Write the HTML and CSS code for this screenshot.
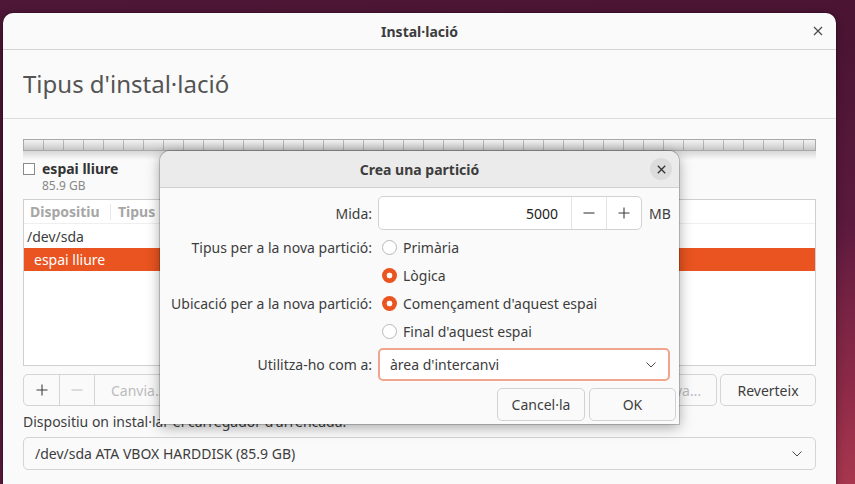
FILE: index.html
```html
<!DOCTYPE html>
<html>
<head>
<meta charset="utf-8">
<title>Instal·lació</title>
<link rel="stylesheet" href="styles.css">
</head>
<body>
<div class="window">
  <div class="titlebar">
    <span class="title">Instal·lació</span>
    <span class="wclose"><svg width="10" height="10" viewBox="0 0 10 10"><path d="M1 1L9 9M9 1L1 9" stroke="#4a4a4a" stroke-width="1.2" fill="none"/></svg></span>
  </div>
  <div class="heading"><h1>Tipus d'instal·lació</h1></div>
  <div class="content">
    <div class="pbar"></div>
    <div class="legend">
      <span class="check"></span>
      <div class="legend-text">
        <div class="lname">espai lliure</div>
        <div class="lsize">85.9 GB</div>
      </div>
    </div>
    <div class="table">
      <div class="thead">
        <span class="th th-dev">Dispositiu</span>
        <span class="th th-type">Tipus</span>
        <span class="th">Punt de muntatge</span>
      </div>
      <div class="tr">/dev/sda</div>
      <div class="tr sel">espai lliure</div>
    </div>
    <div class="toolbar">
      <div class="group">
        <span class="tbtn icon"><svg width="12" height="12" viewBox="0 0 12 12"><path d="M6 0.5V11.5M0.5 6H11.5" stroke="#3d3d3d" stroke-width="1.1" fill="none"/></svg></span>
        <span class="tbtn icon"><svg width="12" height="12" viewBox="0 0 12 12"><path d="M0.5 6H11.5" stroke="#bdbdbd" stroke-width="1.1" fill="none"/></svg></span>
        <span class="tbtn disabled wide">Canvia…</span>
      </div>
      <span class="spacer"></span>
      <span class="tbtn disabled single">Taula de particions nova…</span>
      <span class="tbtn single revert">Reverteix</span>
    </div>
    <div class="bootlabel">Dispositiu on instal·lar el carregador d'arrencada:</div>
    <div class="combo main-combo">
      <span>/dev/sda ATA VBOX HARDDISK (85.9 GB)</span>
      <svg class="chev" width="10" height="6" viewBox="0 0 10 6"><path d="M0.5 0.5L5 5L9.5 0.5" stroke="#4a4a4a" stroke-width="1" fill="none"/></svg>
    </div>
  </div>
</div>

<div class="dialog">
  <div class="dhead">
    <span class="dtitle">Crea una partició</span>
    <span class="dclose"><svg width="9" height="9" viewBox="0 0 9 9"><path d="M0.8 0.8L8.2 8.2M8.2 0.8L0.8 8.2" stroke="#333" stroke-width="1.3" fill="none"/></svg></span>
  </div>
  <div class="dbody">
    <div class="row row-spin">
      <span class="lbl">Mida:</span>
      <div class="spin">
        <span class="spin-val">5000</span>
        <span class="spin-btn"><svg width="12" height="12" viewBox="0 0 12 12"><path d="M0.5 6H11.5" stroke="#3d3d3d" stroke-width="1.1" fill="none"/></svg></span>
        <span class="spin-btn"><svg width="12" height="12" viewBox="0 0 12 12"><path d="M6 0.5V11.5M0.5 6H11.5" stroke="#3d3d3d" stroke-width="1.1" fill="none"/></svg></span>
      </div>
      <span class="unit">MB</span>
    </div>
    <div class="row row-radio first-radio">
      <span class="lbl">Tipus per a la nova partició:</span>
      <span class="radio"></span><span>Primària</span>
    </div>
    <div class="row row-radio">
      <span class="lbl"></span>
      <span class="radio on"></span><span>Lògica</span>
    </div>
    <div class="row row-radio">
      <span class="lbl">Ubicació per a la nova partició:</span>
      <span class="radio on"></span><span>Començament d'aquest espai</span>
    </div>
    <div class="row row-radio">
      <span class="lbl"></span>
      <span class="radio"></span><span>Final d'aquest espai</span>
    </div>
    <div class="row row-combo">
      <span class="lbl">Utilitza-ho com a:</span>
      <div class="combo focus">
        <span>àrea d'intercanvi</span>
        <svg class="chev" width="10" height="6" viewBox="0 0 10 6"><path d="M0.5 0.5L5 5L9.5 0.5" stroke="#4a4a4a" stroke-width="1" fill="none"/></svg>
      </div>
    </div>
    <div class="actions">
      <span class="dbtn cancel">Cancel·la</span>
      <span class="dbtn ok">OK</span>
    </div>
  </div>
</div>
</body>
</html>
```
FILE: styles.css
```css
* { box-sizing: border-box; }

html, body {
  margin: 0;
  padding: 0;
}

body {
  width: 855px;
  height: 484px;
  overflow: hidden;
  position: relative;
  font-family: "Noto Sans", "DejaVu Sans", sans-serif;
  font-size: 14px;
  font-feature-settings: "locl" 0;
  font-variant-ligatures: none;
  color: #3d3d3d;
  background:
    radial-gradient(ellipse 420px 300px at 880px 520px, #b23b52 0%, rgba(160,48,74,0.6) 45%, rgba(120,30,60,0) 100%),
    linear-gradient(165deg, #4e1737 0%, #4a1432 35%, #5c1a3e 65%, #7a2547 100%);
}

/* ---------- main window ---------- */
.window {
  position: absolute;
  left: 3px;
  top: 13px;
  width: 833px;
  height: 490px;
  background: #fafafa;
  border-radius: 10px 10px 0 0;
  box-shadow: 0 0 0 1px rgba(0,0,0,0.15), 0 2px 10px rgba(0,0,0,0.3);
  display: flex;
  flex-direction: column;
}

.titlebar {
  height: 37px;
  border-bottom: 1px solid #d4d4d4;
  display: flex;
  align-items: center;
  justify-content: center;
  position: relative;
}

.title {
  font-weight: 700;
  font-size: 14px;
  color: #3d3d3d;
}

.wclose {
  position: absolute;
  right: 13px;
  top: 13px;
  width: 10px;
  height: 10px;
  display: flex;
}

.heading {
  height: 69px;
  border-bottom: 1px solid #dcdcdc;
  display: flex;
  align-items: center;
  padding-left: 20px;
}

.heading h1 {
  margin: 0;
  font-size: 24px;
  font-weight: 400;
  color: #545454;
  padding-bottom: 1px;
}

.content {
  padding: 20px 20px 0 20px;
  display: flex;
  flex-direction: column;
}

.pbar {
  height: 12px;
  border: 1px solid #a9a9a9;
  background:
    repeating-linear-gradient(90deg, transparent 0 19px, rgba(120,120,120,0.45) 19px 20px),
    linear-gradient(#f2f2f2, #dadada 60%, #c6c6c6);
  position: relative;
}

.pbar::after {
  content: "";
  position: absolute;
  left: -1px;
  right: -1px;
  top: 11px;
  height: 9px;
  background: linear-gradient(rgba(0,0,0,0.14), rgba(0,0,0,0));
}

.legend {
  margin-top: 11px;
  display: flex;
  gap: 7px;
  height: 30px;
}

.check {
  width: 12px;
  height: 12px;
  border: 1px solid #8a8a8a;
  background: #fff;
  margin-top: 1px;
}

.legend-text {
  display: flex;
  flex-direction: column;
  margin-top: -3px;
}

.lname {
  font-weight: 700;
  font-size: 14px;
  line-height: 19px;
  color: #333;
}

.lsize {
  font-size: 12px;
  line-height: 15px;
  color: #888;
}

.table {
  margin-top: 7px;
  height: 167px;
  border: 1px solid #cfcfcf;
  background: #fff;
  display: flex;
  flex-direction: column;
}

.thead {
  height: 24px;
  display: flex;
  align-items: center;
  border-bottom: 1px solid #efefef;
}

.th {
  font-weight: 700;
  color: #a6a6a6;
  padding-left: 6px;
  line-height: 16px;
}

.th-dev {
  width: 87px;
  border-right: 1px solid #e6e6e6;
}

.th-type {
  width: 120px;
  padding-left: 7px;
}

.tr {
  height: 24px;
  display: flex;
  align-items: center;
  padding-left: 3px;
  color: #3d3d3d;
}

.tr.sel {
  height: 23px;
  background: #e95420;
  color: #fff;
  padding-left: 10px;
}

.toolbar {
  margin-top: 8px;
  height: 32px;
  display: flex;
  gap: 3px;
}

.group {
  display: flex;
  border: 1px solid #d4d4d4;
  border-radius: 5px;
  overflow: hidden;
  background: #fafafa;
}

.tbtn {
  height: 30px;
  display: flex;
  align-items: center;
  justify-content: center;
  color: #3d3d3d;
}

.group .tbtn + .tbtn {
  border-left: 1px solid #d4d4d4;
}

.tbtn.icon {
  width: 35px;
}

.tbtn.wide {
  padding: 0 16px;
  width: 100px;
  justify-content: flex-start;
}

.tbtn.disabled {
  color: #bcbcbc;
}

.spacer { flex: 1; }

.tbtn.single {
  height: 32px;
  border: 1px solid #d4d4d4;
  border-radius: 5px;
  padding: 0 15px;
  background: #fafafa;
}

.tbtn.revert {
  width: 96px;
}

.bootlabel {
  margin-top: 7px;
  line-height: 18px;
  color: #3d3d3d;
}

.combo {
  display: flex;
  align-items: center;
  justify-content: space-between;
  border: 1px solid #d4d4d4;
  border-radius: 5px;
  background: #fafafa;
}

.main-combo {
  margin-top: 6px;
  height: 33px;
  padding: 0 13px 0 11px;
}

.chev { flex: none; }

/* ---------- dialog ---------- */
.dialog {
  position: absolute;
  left: 160px;
  top: 151px;
  width: 519px;
  height: 273px;
  background: #fafafa;
  border-radius: 10px 10px 0 0;
  box-shadow: 0 0 0 1px rgba(0,0,0,0.18), 0 3px 14px rgba(0,0,0,0.35);
  display: flex;
  flex-direction: column;
}

.dhead {
  height: 37px;
  background: #ebebeb;
  border-bottom: 1px solid #cfcfcf;
  border-radius: 10px 10px 0 0;
  display: flex;
  align-items: center;
  justify-content: center;
  position: relative;
}

.dtitle {
  font-weight: 700;
  color: #3d3d3d;
}

.dclose {
  position: absolute;
  right: 7px;
  top: 7px;
  width: 22px;
  height: 22px;
  border-radius: 50%;
  background: #dcdcdc;
  display: flex;
  align-items: center;
  justify-content: center;
}

.dbody {
  padding: 8px 3px 0 0;
  display: flex;
  flex-direction: column;
}

.row {
  display: flex;
  align-items: center;
}

.lbl {
  width: 212px;
  text-align: right;
  margin-right: 6px;
  flex: none;
}

.row-spin { height: 34px; }

.spin {
  width: 264px;
  height: 34px;
  border: 1px solid #d2d2d2;
  border-radius: 5px;
  background: #fff;
  display: flex;
}

.spin-val {
  flex: 1;
  display: flex;
  align-items: center;
  justify-content: flex-end;
  padding-right: 13px;
  color: #222;
}

.spin-btn {
  width: 35px;
  border-left: 1px solid #e4e4e4;
  display: flex;
  align-items: center;
  justify-content: center;
}

.unit {
  margin-left: 7px;
}

.row-radio { height: 28px; }
.first-radio { margin-top: 3px; }

.radio {
  width: 15px;
  height: 15px;
  border-radius: 50%;
  border: 1px solid #b9b9b9;
  background: #fff;
  margin-left: 4px;
  margin-right: 6px;
  flex: none;
}

.radio.on {
  border: none;
  background: radial-gradient(circle, #fff 0 2.6px, #e95420 3.2px);
}

.row-combo {
  margin-top: 3px;
  height: 33px;
}

.combo.focus {
  width: 292px;
  height: 33px;
  border: 2px solid #efa68c;
  background: #fff;
  padding: 0 12px 0 10px;
}

.actions {
  margin-top: 7px;
  display: flex;
  justify-content: flex-end;
  gap: 4px;
}

.dbtn {
  height: 33px;
  border: 1px solid #d2d2d2;
  border-radius: 5px;
  background: #fafafa;
  display: flex;
  align-items: center;
  justify-content: center;
}

.dbtn.cancel { width: 88px; }
.dbtn.ok { width: 87px; }
```
